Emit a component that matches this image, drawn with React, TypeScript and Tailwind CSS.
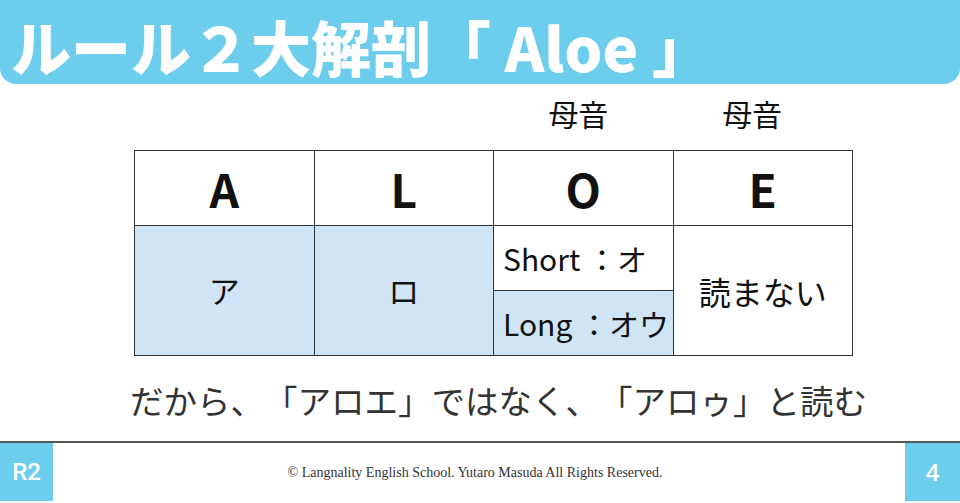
export default function App() {
    const jp = "font-['Noto_Sans_CJK_JP',sans-serif]";
    return (
        <div className={`flex h-[503px] w-[960px] flex-col bg-white ${jp}`}>
            {/* Title bar */}
            <header className="flex h-[84px] items-center rounded-b-[16px] bg-[#6dcdec] pl-[11px] pt-[8px]">
                <h1 className="text-[60px] font-black leading-none text-white">ルール２大解剖「 Aloe 」</h1>
            </header>

            {/* Vowel labels */}
            <div className="ml-[134px] grid h-[66px] w-[719px] grid-cols-4 pt-[14px] text-[30px] leading-none text-[#111]">
                <div />
                <div />
                <div className="text-center -translate-x-[5px]">母音</div>
                <div className="text-center -translate-x-[11px]">母音</div>
            </div>

            {/* Table */}
            <div className="ml-[134px] grid w-[719px] grid-cols-4 grid-rows-[75px_65px_65px] border-l border-t border-[#333] text-[#111]">
                {['A', 'L', 'O', 'E'].map((l) => (
                    <div key={l} className="flex items-center justify-center border-b border-r border-[#333] text-[46px] font-bold leading-none">
                        {l}
                    </div>
                ))}
                <div className="row-span-2 flex items-center justify-center border-b border-r border-[#333] bg-[#cfe5f5] text-[31px]">ア</div>
                <div className="row-span-2 flex items-center justify-center border-b border-r border-[#333] bg-[#cfe5f5] text-[31px]">ロ</div>
                <div className="flex items-center border-b border-r border-[#333] pl-[9px] text-[30px]">Short ：オ</div>
                <div className="row-span-2 flex items-center justify-center border-b border-r border-[#333] text-[32px]">読まない</div>
                <div className="flex items-center border-b border-r border-[#333] bg-[#cfe5f5] pl-[9px] text-[30px]">Long ：オウ</div>
            </div>

            {/* Sentence */}
            <p className="ml-[130px] mt-[27px] text-[33.5px] leading-none text-[#333] [text-spacing-trim:space-all]">
                だから、「アロエ」ではなく、「アロゥ」と読む
            </p>

            {/* Footer */}
            <footer className="mt-auto flex h-[62px] items-start border-t-2 border-[#555]">
                <div className="flex h-[58px] w-[53px] items-center justify-center bg-[#6dcdec] font-['Roboto',sans-serif] text-[24px] font-medium text-white">
                    R2
                </div>
                <div className="flex h-[58px] flex-1 items-center justify-center pr-[8px] font-['Liberation_Serif',serif] text-[14px] text-[#333]">
                    © Langnality English School. Yutaro Masuda All Rights Reserved.
                </div>
                <div className="flex h-[58px] w-[55px] items-center justify-center bg-[#6dcdec] font-['Open_Sans',sans-serif] text-[24px] font-semibold text-white">
                    4
                </div>
            </footer>
        </div>
    );
}
